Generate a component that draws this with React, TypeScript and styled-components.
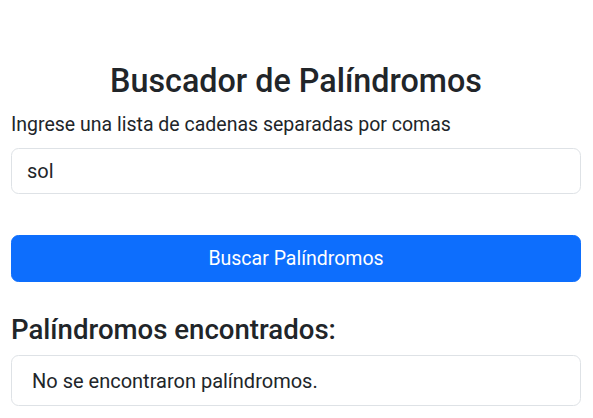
import React, { useState } from "react";
import styled, { createGlobalStyle } from "styled-components";

const GlobalStyle = createGlobalStyle`
  * { box-sizing: border-box; }
  body {
    margin: 0;
    background: #ffffff;
    color: #212529;
    font-family: Roboto, "Liberation Sans", Arial, sans-serif;
    font-size: 19.5px;
    line-height: 1.5;
  }
`;

const Container = styled.main`
  padding: 61px 12px 0 11px;
  display: flex;
  flex-direction: column;
`;

const Title = styled.h1`
  margin: 0 0 9px;
  font-size: 32.3px;
  font-weight: 500;
  line-height: 40px;
  text-align: center;
`;

const Label = styled.label`
  display: block;
  margin: 0 0 9px;
  font-size: 19.5px;
  line-height: 1.5;
`;

const Input = styled.input`
  display: block;
  width: 100%;
  height: 46px;
  margin: 0;
  padding: 7px 15px;
  font: inherit;
  font-size: 20px;
  color: #212529;
  background: #ffffff;
  border: 1px solid #dee2e6;
  border-radius: 7.5px;
  outline: none;
`;

const Button = styled.button`
  display: block;
  width: 100%;
  height: 47px;
  margin: 41px 0 0;
  padding: 0 15px;
  font: inherit;
  font-size: 19.5px;
  color: #ffffff;
  background: #0d6efd;
  border: 1px solid #0d6efd;
  border-radius: 7.5px;
  cursor: pointer;
`;

const SubTitle = styled.h3`
  margin: 31px 0 9px;
  font-size: 27.6px;
  font-weight: 500;
  line-height: 1.2;
`;

const ResultList = styled.ul`
  margin: 0;
  padding: 0;
  list-style: none;
  border: 1px solid #dee2e6;
  border-radius: 7.5px;
`;

const ResultItem = styled.li`
  padding: 9.5px 20px;
  font-size: 20px;
  line-height: 30px;
`;

export default function App() {
  const [value, setValue] = useState("sol");
  return (
    <>
      <GlobalStyle />
      <Container>
        <Title>Buscador de Palíndromos</Title>
        <Label htmlFor="cadenas">Ingrese una lista de cadenas separadas por comas</Label>
        <Input id="cadenas" value={value} onChange={(e) => setValue(e.target.value)} />
        <Button type="button">Buscar Palíndromos</Button>
        <SubTitle>Palíndromos encontrados:</SubTitle>
        <ResultList>
          <ResultItem>No se encontraron palíndromos.</ResultItem>
        </ResultList>
      </Container>
    </>
  );
}
